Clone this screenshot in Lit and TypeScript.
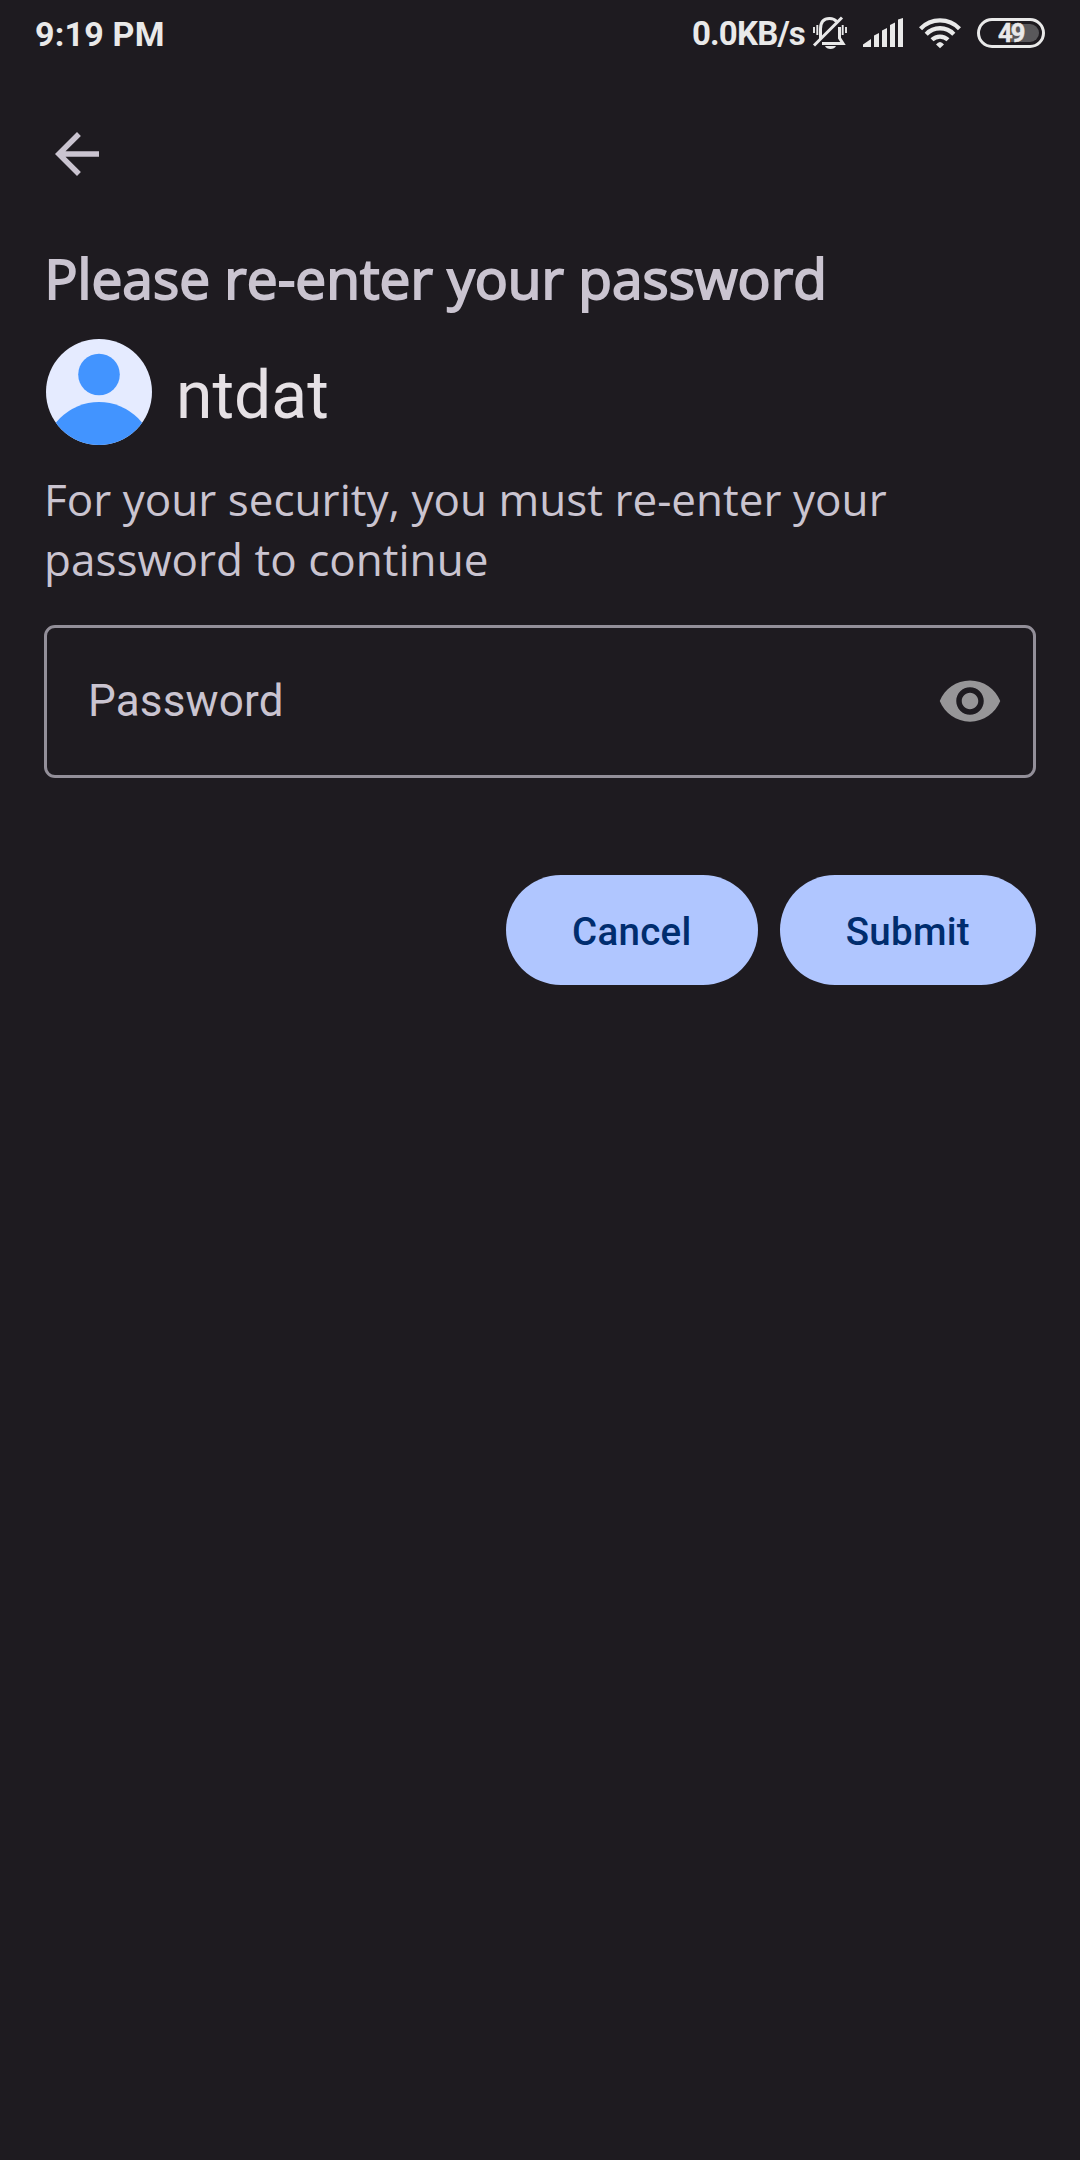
import { LitElement, html, css } from "lit";
import { customElement } from "lit/decorators.js";

@customElement("status-bar")
class StatusBar extends LitElement {
  static styles = css`
    :host {
      display: flex;
      align-items: center;
      height: 66px;
      padding: 0 34px 0 35px;
      box-sizing: border-box;
      font-family: Roboto, sans-serif;
      font-weight: 700;
      color: #e9e9e9;
    }
    .time {
      font-size: 34px;
      letter-spacing: 0.2px;
      line-height: 40px;
      margin-top: 2px;
      flex: 1;
      white-space: nowrap;
    }
    .rate {
      font-size: 33px;
      letter-spacing: -0.8px;
      line-height: 40px;
      margin-top: 2px;
      white-space: nowrap;
    }
    svg {
      display: block;
      flex: none;
    }
    .bell { margin-left: 7px; }
    .signal { margin-left: 16px; }
    .wifi { margin-left: 15px; }
    .battery { margin-left: 16px; }
    .level {
      font-family: Roboto, sans-serif;
      font-weight: 700;
      font-size: 25.500px;
      letter-spacing: -1.800px;
    }
  `;

  render() {
    return html`
      <span class="time">9:19 PM</span>
      <span class="rate">0.0KB/s</span>
      <svg class="bell" width="35" height="34" viewBox="812 16 35 34" fill="none" stroke="#e9e9e9" stroke-width="3">
        <path d="M820.500 39V29C820.500 22 824 18.500 829.500 18.500C832.500 18.500 835 19.500 836.500 21.500M839.500 27V38L843 43.500H822" />
        <path d="M814 45.500L842 17.500" />
        <path d="M814 27V33M817.300 25V35M842.700 25V35M846 27V33" stroke-width="1.900" />
        <path d="M825 46H836C834.500 50 826.500 50 825 46Z" fill="#e9e9e9" stroke="none" />
      </svg>
      <svg class="signal" width="41" height="34" viewBox="863 16 41 34" fill="#e9e9e9">
        <path d="M863 44.500L871 39V47H863ZM874 35.500L879 33V47H874ZM882 30.500L887 28V47H882ZM890 25L895 22.500V47H890ZM898 19.500L903 18V47H898Z" />
      </svg>
      <svg class="wifi" width="42" height="34" viewBox="919 16 42 34" fill="none" stroke="#e9e9e9" stroke-width="4.300">
        <path d="M920.500 28.700A27 27 0 0 1 959.500 28.700M926.200 34.200A19 19 0 0 1 953.800 34.200M932 39.800A11.500 11.500 0 0 1 948 39.800" />
        <path d="M936 44.500Q940 39.500 944 44.500L940 48.300Z" fill="#e9e9e9" stroke="none" />
      </svg>
      <svg class="battery" width="69" height="34" viewBox="977 16 69 34">
        <path d="M1011 24H1030A9 9 0 0 1 1030 42H1011Z" fill="#59585b" />
        <rect x="978.500" y="19.500" width="65" height="27" rx="13.500" fill="none" stroke="#e9e9e9" stroke-width="3" />
        <text class="level" x="998" y="42" fill="#e9e9e9" stroke="#e9e9e9" stroke-width="0.500">49</text>
      </svg>
    `;
  }
}

@customElement("app-root")
class AppRoot extends LitElement {
  static styles = css`
    :host {
      display: flex;
      flex-direction: column;
      height: 2160px;
      background: #1e1b20;
      color: #cac4d0;
      font-family: Roboto, sans-serif;
    }
    .toolbar {
      display: flex;
      height: 66px;
      padding: 55px 44px 0;
    }
    svg { display: block; flex: none; }
    .content {
      display: flex;
      flex-direction: column;
      padding: 52px 44px 0;
    }
    .title {
      margin: 0;
      padding-left: 0.500px;
      font: 400 55px/78px "Open Sans", "Noto Sans", sans-serif;
      -webkit-text-stroke: 1.900px #cac4d0;
      white-space: nowrap;
    }
    .account {
      display: flex;
      align-items: center;
      gap: 24px;
      height: 106px;
      margin-top: 22px;
      padding-left: 2px;
    }
    .name {
      font-size: 66px;
      line-height: 78px;
      color: #e6e1e5;
      padding-top: 7px;
    }
    .hint {
      margin: 24px 0 0;
      font: 400 44px/60px "Open Sans", "Noto Sans", sans-serif;
      letter-spacing: 0.030px;
    }
    .field {
      display: flex;
      align-items: center;
      justify-content: space-between;
      height: 153px;
      margin-top: 36px;
      padding: 0 30px 1px 41px;
      box-sizing: border-box;
      border: 3px solid #938f99;
      border-radius: 11px;
      font-size: 44px;
      letter-spacing: 0.180px;
    }
    .actions {
      display: flex;
      justify-content: flex-end;
      gap: 22px;
      margin-top: 97px;
    }
    .button {
      height: 110px;
      padding: 3px 66px 0;
      border: 0;
      border-radius: 55px;
      background: #b0c6ff;
      color: #002d6e;
      font: 500 38.500px/107px Roboto, sans-serif;
      letter-spacing: 0.300px;
    }
  `;

  render() {
    return html`
      <status-bar></status-bar>
      <div class="toolbar">
        <svg width="66" height="66" viewBox="0 0 24 24" fill="#cac4d0">
          <path d="M20 11H7.830l5.590-5.590L12 4l-8 8 8 8 1.410-1.410L7.830 13H20v-2z" />
        </svg>
      </div>
      <div class="content">
        <h1 class="title">Please re-enter your password</h1>
        <div class="account">
          <svg width="106" height="106" viewBox="0 0 106 106">
            <clipPath id="disc"><circle cx="53" cy="53" r="53" /></clipPath>
            <g clip-path="url(#disc)">
              <rect width="106" height="106" fill="#e5ebff" />
              <circle cx="53" cy="35.500" r="20.800" fill="#4294ff" />
              <circle cx="53" cy="118" r="55" fill="#4294ff" />
            </g>
          </svg>
          <span class="name">ntdat</span>
        </div>
        <p class="hint">For your security, you must re-enter your password to continue</p>
        <div class="field">
          <span>Password</span>
          <svg width="66" height="66" viewBox="0 0 24 24" fill="#979698">
            <path d="M12 4.500C7 4.500 2.730 7.610 1 12c1.730 4.390 6 7.500 11 7.500s9.270-3.110 11-7.500c-1.730-4.390-6-7.500-11-7.500zM12 17c-2.760 0-5-2.240-5-5s2.240-5 5-5 5 2.240 5 5-2.240 5-5 5zm0-8c-1.660 0-3 1.340-3 3s1.340 3 3 3 3-1.340 3-3-1.340-3-3-3z" />
          </svg>
        </div>
        <div class="actions">
          <button class="button">Cancel</button>
          <button class="button">Submit</button>
        </div>
      </div>
    `;
  }
}
